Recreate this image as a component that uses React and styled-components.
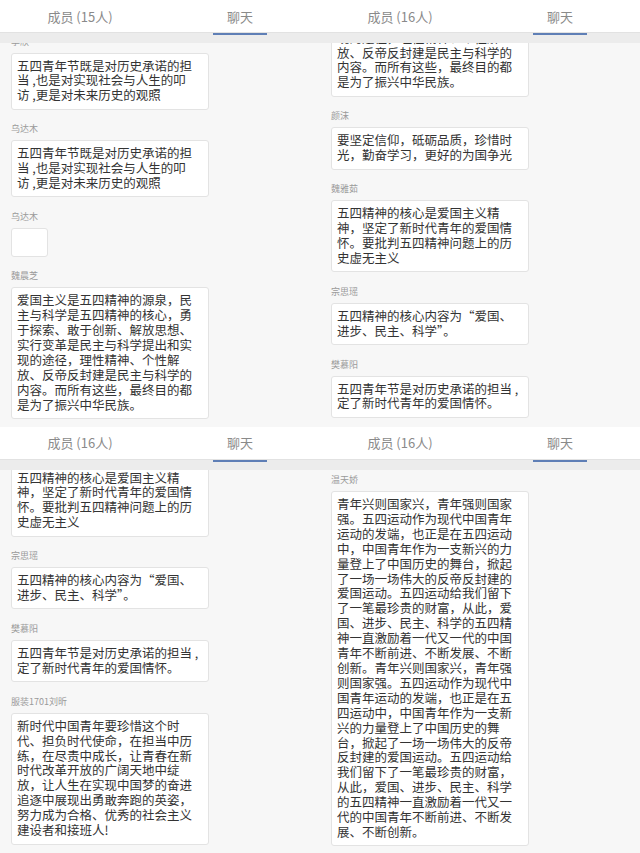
import React from 'react';
import styled, { createGlobalStyle } from 'styled-components';

const Global = createGlobalStyle`
  html, body { margin: 0; padding: 0; background: #f7f7f7; overflow: hidden; }
  * { box-sizing: border-box; }
  body { font-family: "Noto Sans CJK SC", "Noto Sans", sans-serif; }
`;

const Screen = styled.div`
  display: grid;
  grid-template-columns: 320px 320px;
  grid-template-rows: 426.5px 426.5px;
  width: 640px;
  height: 853px;
  overflow: hidden;
`;

const Panel = styled.section`
  display: flex;
  flex-direction: column;
  overflow: hidden;
  background: #f7f7f7;
`;

const Header = styled.div`
  display: grid;
  grid-template-columns: 1fr 1fr;
  height: 33px;
  background: #fff;
  border-bottom: 1px solid #e2e2e2;
  flex-shrink: 0;
`;

const Tab = styled.div`
  position: relative;
  display: flex;
  align-items: center;
  justify-content: center;
  font-size: 13px;
  color: #8a8a8a;
  line-height: 1;
  white-space: nowrap;
  &::after {
    content: '';
    display: ${p => (p.$active ? 'block' : 'none')};
    position: absolute;
    left: 50%;
    transform: translateX(-50%);
    top: calc(100% + 1px);
    width: 54px;
    height: 2px;
    background: #5f7fb6;
    z-index: 2;
  }
`;

const Band = styled.div`
  height: 10px;
  flex-shrink: 0;
  background: #ececec;
`;

const Content = styled.div`
  flex: 1;
  overflow: hidden;
  padding: 0 11px;
`;

const List = styled.div`
  display: flex;
  flex-direction: column;
  align-items: flex-start;
  margin-top: ${p => p.$offset}px;
`;

const Message = styled.div`
  display: flex;
  flex-direction: column;
  align-items: flex-start;
  margin-bottom: 13.5px;
`;

const Name = styled.div`
  font-size: 9px;
  line-height: 12px;
  height: 12px;
  color: #9a9a9a;
  margin-bottom: 5px;
  white-space: nowrap;
`;

const Bubble = styled.div`
  max-width: 198px;
  width: ${p => (p.$empty ? '37px' : 'auto')};
  height: ${p => (p.$empty ? '29px' : 'auto')};
  background: #fff;
  border: 1px solid #e3e3e3;
  border-radius: 3px;
  padding: 5px 8px 5.5px 5px;
  font-size: 12.5px;
  line-height: 14.9px;
  color: #333;
  word-break: normal;
  overflow-wrap: break-word;
`;

const NB = '\u00a0';
const T_DANDANG = `五四青年节既是对历史承诺的担当${NB},也是对实现社会与人生的叩访${NB},更是对未来历史的观照`;
const T_WEICZ = '爱国主义是五四精神的源泉，民主与科学是五四精神的核心，勇于探索、敢于创新、解放思想、实行变革是民主与科学提出和实现的途径，理性精神、个性解放、反帝反封建是民主与科学的内容。而所有这些，最终目的都是为了振兴中华民族。';
const T_YANMO = '要坚定信仰，砥砺品质，珍惜时光，勤奋学习，更好的为国争光';
const T_WEIYR = '五四精神的核心是爱国主义精神，坚定了新时代青年的爱国情怀。要批判五四精神问题上的历史虚无主义';
const T_ZONG = '五四精神的核心内容为“爱国、进步、民主、科学”。';
const T_FAN = `五四青年节是对历史承诺的担当${NB},定了新时代青年的爱国情怀。`;
const T_LIU = '新时代中国青年要珍惜这个时代、担负时代使命，在担当中历练，在尽责中成长，让青春在新时代改革开放的广阔天地中绽放，让人生在实现中国梦的奋进追逐中展现出勇敢奔跑的英姿，努力成为合格、优秀的社会主义建设者和接班人!';
const T_WEN_HALF = '青年兴则国家兴，青年强则国家强。五四运动作为现代中国青年运动的发端，也正是在五四运动中，中国青年作为一支新兴的力量登上了中国历史的舞台，掀起了一场一场伟大的反帝反封建的爱国运动。五四运动给我们留下了一笔最珍贵的财富，从此，爱国、进步、民主、科学的五四精神一直激励着一代又一代的中国青年不断前进、不断发展、不断创新。';

const panels = [
  {
    count: 15,
    offset: -7.5,
    messages: [
      { name: '李欣', text: T_DANDANG },
      { name: '乌达木', text: T_DANDANG },
      { name: '乌达木', text: '', empty: true },
      { name: '魏晨芝', text: T_WEICZ },
    ],
  },
  {
    count: 16,
    offset: -95,
    messages: [
      { name: '魏晨芝', text: T_WEICZ },
      { name: '颜沫', text: T_YANMO },
      { name: '魏雅茹', text: T_WEIYR },
      { name: '宗思瑶', text: T_ZONG },
      { name: '樊慕阳', text: T_FAN },
    ],
  },
  {
    count: 16,
    offset: -22,
    messages: [
      { name: '魏雅茹', text: T_WEIYR },
      { name: '宗思瑶', text: T_ZONG },
      { name: '樊慕阳', text: T_FAN },
      { name: '服装1701刘昕', text: T_LIU },
    ],
  },
  {
    count: 16,
    offset: 4.5,
    messages: [{ name: '温天娇', text: T_WEN_HALF + T_WEN_HALF }],
  },
];

function ChatPanel({ count, offset, messages }) {
  return (
    <Panel>
      <Header>
        <Tab>{`成员 (${count}人)`}</Tab>
        <Tab $active>聊天</Tab>
      </Header>
      <Band />
      <Content>
        <List $offset={offset}>
          {messages.map((m, i) => (
            <Message key={i}>
              <Name>{m.name}</Name>
              <Bubble $empty={m.empty}>{m.empty ? NB : m.text}</Bubble>
            </Message>
          ))}
        </List>
      </Content>
    </Panel>
  );
}

export default function App() {
  return (
    <>
      <Global />
      <Screen>
        {panels.map((p, i) => (
          <ChatPanel key={i} {...p} />
        ))}
      </Screen>
    </>
  );
}
